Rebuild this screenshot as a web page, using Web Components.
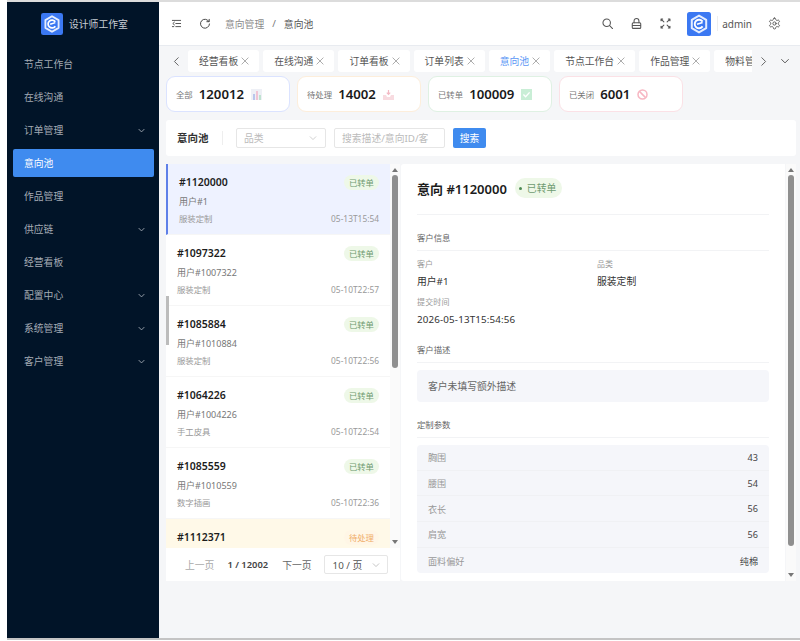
<!DOCTYPE html>
<html lang="zh-CN">
<head>
<meta charset="utf-8">
<title>意向池</title>
<style>
  html, body { margin: 0; height: 641px; overflow: hidden; background: #fff; }
  body { font-family: "Noto Sans", "Noto Sans CJK SC", sans-serif; color: #222; }
</style>
</head>
<body>
<app-shell>
  <side-nav slot="nav">
    <nav-item>节点工作台</nav-item>
    <nav-item>在线沟通</nav-item>
    <nav-item arrow>订单管理</nav-item>
    <nav-item active>意向池</nav-item>
    <nav-item>作品管理</nav-item>
    <nav-item arrow>供应链</nav-item>
    <nav-item>经营看板</nav-item>
    <nav-item arrow>配置中心</nav-item>
    <nav-item arrow>系统管理</nav-item>
    <nav-item arrow>客户管理</nav-item>
  </side-nav>
  <top-bar slot="top"></top-bar>
  <tab-strip slot="tabs">
    <tab-item>经营看板</tab-item>
    <tab-item>在线沟通</tab-item>
    <tab-item>订单看板</tab-item>
    <tab-item>订单列表</tab-item>
    <tab-item active>意向池</tab-item>
    <tab-item>节点工作台</tab-item>
    <tab-item>作品管理</tab-item>
    <tab-item>物料管理</tab-item>
  </tab-strip>
  <stat-row slot="stats">
    <stat-card label="全部" value="120012" tone="#dbe3ff" icon="chart"></stat-card>
    <stat-card label="待处理" value="14002" tone="#fdeedb" icon="inbox"></stat-card>
    <stat-card label="已转单" value="100009" tone="#dff1e3" icon="check"></stat-card>
    <stat-card label="已关闭" value="6001" tone="#fbe1e6" icon="ban"></stat-card>
  </stat-row>
  <filter-bar slot="filter"></filter-bar>
  <intent-list slot="list">
    <intent-row selected code="#1120000" user="用户#1" cat="服装定制" time="05-13T15:54"></intent-row>
    <intent-row code="#1097322" user="用户#1007322" cat="服装定制" time="05-10T22:57"></intent-row>
    <intent-row code="#1085884" user="用户#1010884" cat="服装定制" time="05-10T22:56"></intent-row>
    <intent-row code="#1064226" user="用户#1004226" cat="手工皮具" time="05-10T22:54"></intent-row>
    <intent-row code="#1085559" user="用户#1010559" cat="数字插画" time="05-10T22:36"></intent-row>
    <intent-row pending code="#1112371"></intent-row>
  </intent-list>
  <detail-panel slot="detail"></detail-panel>
</app-shell>

<script>
const ICONS = {
  fold: '<path d="M2 3.5h12M7 8h7M7 12.5h7M2 12.5h2M5 6 2.6 8 5 10"/>',
  refresh: '<path d="M13.2 4.6A6 6 0 1 0 14 8"/><path d="M13.6 1.8v3.1h-3.1"/>',
  search: '<circle cx="7" cy="7" r="4.6"/><path d="m10.4 10.4 3.8 3.8"/>',
  lock: '<rect x="2.8" y="7" width="10.4" height="7" rx="1.2"/><path d="M5 7V4.8a3 3 0 0 1 6 0V7M3 10.4h10"/>',
  full: '<path d="M2.5 2.5 6 6M13.5 2.5 10 6M2.5 13.5 6 10M13.5 13.5 10 10M2.5 2.5h2M2.5 2.5v2M13.5 2.5h-2M13.5 2.5v2M2.5 13.5h2M2.5 13.5v-2M13.5 13.5h-2M13.5 13.5v-2"/>',
  gear: '<g transform="scale(.667)"><path d="M12.22 2h-.44a2 2 0 0 0-2 2v.18a2 2 0 0 1-1 1.73l-.43.25a2 2 0 0 1-2 0l-.15-.08a2 2 0 0 0-2.73.73l-.22.38a2 2 0 0 0 .73 2.73l.15.1a2 2 0 0 1 1 1.72v.51a2 2 0 0 1-1 1.74l-.15.09a2 2 0 0 0-.73 2.73l.22.38a2 2 0 0 0 2.73.73l.15-.08a2 2 0 0 1 2 0l.43.25a2 2 0 0 1 1 1.73V20a2 2 0 0 0 2 2h.44a2 2 0 0 0 2-2v-.18a2 2 0 0 1 1-1.73l.43-.25a2 2 0 0 1 2 0l.15.08a2 2 0 0 0 2.73-.73l.22-.39a2 2 0 0 0-.73-2.73l-.15-.08a2 2 0 0 1-1-1.74v-.5a2 2 0 0 1 1-1.74l.15-.09a2 2 0 0 0 .73-2.73l-.22-.38a2 2 0 0 0-2.73-.73l-.15.08a2 2 0 0 1-2 0l-.43-.25a2 2 0 0 1-1-1.73V4a2 2 0 0 0-2-2z"/><circle cx="12" cy="12" r="3"/></g>',
  down: '<path d="m3.5 6 4.5 4.5L12.5 6"/>',
  left: '<path d="M10.5 2.5 5 8l5.5 5.5"/>',
  right: '<path d="M5.5 2.5 11 8l-5.5 5.5"/>',
  close: '<path d="m3 3 10 10M13 3 3 13"/>'
};

class AppIcon extends HTMLElement {
  connectedCallback() {
    const size = this.getAttribute('size') || 12;
    const width = this.getAttribute('stroke') || 1.3;
    this.attachShadow({ mode: 'open' }).innerHTML = `
      <style>:host { display: inline-flex; flex: none; }</style>
      <svg width="${size}" height="${size}" viewBox="0 0 16 16" fill="none" stroke="currentColor"
        stroke-width="${width}" stroke-linecap="round" stroke-linejoin="round">${ICONS[this.getAttribute('name')]}</svg>`;
  }
}
customElements.define('app-icon', AppIcon);

class BrandLogo extends HTMLElement {
  connectedCallback() {
    const size = this.getAttribute('size') || 22;
    this.attachShadow({ mode: 'open' }).innerHTML = `
      <style>:host { display: inline-flex; flex: none; }</style>
      <svg width="${size}" height="${size}" viewBox="0 0 24 24">
        <rect width="24" height="24" rx="2.5" fill="#3b78f2"/>
        <path d="M12 3.6 19.2 7.8v8.4L12 20.4l-7.2-4.2V7.8z" fill="none" stroke="#e4edff" stroke-width="2" stroke-linejoin="round"/>
        <path d="M15.6 9.6A4.3 4.3 0 1 0 15.6 14.4" fill="none" stroke="#fff" stroke-width="1.9"/>
        <path d="M10 12.3l5.6-1.8" fill="none" stroke="#fff" stroke-width="1.7"/>
      </svg>`;
  }
}
customElements.define('brand-logo', BrandLogo);

class AppShell extends HTMLElement {
  constructor() {
    super();
    this.attachShadow({ mode: 'open' }).innerHTML = `
      <style>
        :host {
          display: grid;
          grid-template-columns: 152px 1fr;
          height: 636px;
          margin: 2px 0 0 7px;
          border-bottom: 2px solid #c4c4c4;
          background: #f5f6f8;
          box-shadow: 0 -2px 0 #dcdcdc;
        }
        .main { display: flex; flex-direction: column; min-width: 0; overflow: hidden; }
        .content { display: flex; flex-direction: column; padding: 0 4px 0 7px; }
        .panels { display: flex; margin-top: 8px; height: 417px; position: relative; }
      </style>
      <slot name="nav"></slot>
      <div class="main">
        <slot name="top"></slot>
        <slot name="tabs"></slot>
        <div class="content">
          <slot name="stats"></slot>
          <slot name="filter"></slot>
          <div class="panels">
            <slot name="list"></slot>
            <slot name="detail"></slot>
          </div>
        </div>
      </div>`;
  }
}
customElements.define('app-shell', AppShell);

class SideNav extends HTMLElement {
  constructor() {
    super();
    this.attachShadow({ mode: 'open' }).innerHTML = `
      <style>
        :host { display: block; background: #011428; }
        .brand { display: flex; align-items: center; gap: 6px; height: 44px; padding: 0 0 0 34px; margin-bottom: 4px;
          color: #c9ced4; font-size: 9.8px; }
        .items { display: flex; flex-direction: column; gap: 5px; padding: 0 5px 0 6px; }
      </style>
      <div class="brand"><brand-logo size="22"></brand-logo><span>设计师工作室</span></div>
      <div class="items"><slot></slot></div>`;
  }
}
customElements.define('side-nav', SideNav);

class NavItem extends HTMLElement {
  connectedCallback() {
    const arrow = this.hasAttribute('arrow') ? '<app-icon name="down" size="9" stroke="1.6"></app-icon>' : '';
    this.attachShadow({ mode: 'open' }).innerHTML = `
      <style>
        :host { display: flex; align-items: center; justify-content: space-between; height: 28px;
          padding: 0 8px 0 11px; border-radius: 2px; color: #a4abb4; font-size: 9.8px; }
        :host([active]) { background: #3f8bef; color: #fff; }
      </style>
      <slot></slot>${arrow}`;
  }
}
customElements.define('nav-item', NavItem);

class TopBar extends HTMLElement {
  constructor() {
    super();
    this.attachShadow({ mode: 'open' }).innerHTML = `
      <style>
        :host { display: flex; align-items: center; height: 44px; flex: none; padding: 0 19px 0 12px; background: #fff;
          border-bottom: 1px solid #e8ebf0; box-sizing: border-box; color: #444; font-size: 9.8px; }
        .left { display: flex; align-items: center; gap: 17px; margin-right: 14px; }
        .crumb { color: #8b8b8b; }
        .sep { margin: 0 8px; color: #777; }
        .now { color: #555; }
        .right { margin-left: auto; display: flex; align-items: center; gap: 16px; color: #555; }
        .user { display: flex; align-items: center; margin-left: -1px; }
        .user i { width: 1px; height: 15px; background: #eee; margin: 0 4px 0 6px; }
        .user span { font-size: 10px; color: #555; }
      </style>
      <div class="left"><app-icon name="fold" size="11"></app-icon><app-icon name="refresh" size="12"></app-icon></div>
      <span class="crumb">意向管理</span><span class="sep">/</span><span class="now">意向池</span>
      <div class="right">
        <app-icon name="search" size="13"></app-icon>
        <app-icon name="lock" size="13"></app-icon>
        <app-icon name="full" size="13"></app-icon>
        <div class="user"><brand-logo size="24"></brand-logo><i></i><span>admin</span></div>
        <app-icon name="gear" size="13" stroke="1.7"></app-icon>
      </div>`;
  }
}
customElements.define('top-bar', TopBar);

class TabStrip extends HTMLElement {
  constructor() {
    super();
    this.attachShadow({ mode: 'open' }).innerHTML = `
      <style>
        :host { display: flex; align-items: center; height: 22px; margin-top: 4px; flex: none; color: #555; }
        .arrow { width: 29px; box-sizing: border-box; padding-left: 12px; display: flex; flex: none; }
        .track { display: flex; gap: 4px; width: 564px; flex: none; overflow: hidden; }
        .end { margin-left: 6px; width: 11px; display: flex; justify-content: center; }
        .more { margin-left: 10px; }
      </style>
      <div class="arrow"><app-icon name="left" size="11"></app-icon></div>
      <div class="track"><slot></slot></div>
      <div class="end"><app-icon name="right" size="11"></app-icon></div>
      <div class="more"><app-icon name="down" size="12"></app-icon></div>`;
  }
}
customElements.define('tab-strip', TabStrip);

class TabItem extends HTMLElement {
  connectedCallback() {
    this.attachShadow({ mode: 'open' }).innerHTML = `
      <style>
        :host { display: inline-flex; align-items: center; gap: 2px; height: 22px; padding: 0 9px 0 11px; flex: none;
          background: #fff; border-radius: 3px; color: #555; font-size: 9.8px; }
        :host([active]) { color: #5b97f5; }
        app-icon { color: #888; }
      </style>
      <slot></slot><app-icon name="close" size="10" stroke="1.1"></app-icon>`;
  }
}
customElements.define('tab-item', TabItem);

class StatRow extends HTMLElement {
  constructor() {
    super();
    this.attachShadow({ mode: 'open' }).innerHTML = `
      <style>:host { display: flex; gap: 7px; margin-top: 4px; }</style><slot></slot>`;
  }
}
customElements.define('stat-row', StatRow);

const STAT_ICONS = {
  chart: '<rect x="0" y="0" width="11" height="11" fill="#eef0f6"/><rect x="2" y="5" width="2" height="6" fill="#b9c6ec"/><rect x="5" y="2" width="2" height="9" fill="#f0c4d4"/><rect x="8" y="6" width="2" height="5" fill="#bfe3d0"/>',
  inbox: '<path d="M0 6h3l1 2h3l1-2h3v5H0z" fill="#f8dbe0"/><path d="M5.5 1v4M3.8 3.6l1.7 1.8 1.7-1.8" stroke="#f3b9c4" stroke-width="1.2" fill="none"/>',
  check: '<rect width="11" height="11" fill="#c9eed6"/><path d="m2.4 5.6 2.2 2.2 4-4.4" stroke="#fff" stroke-width="1.4" fill="none"/>',
  ban: '<circle cx="5.5" cy="5.5" r="4.5" stroke="#f7b6c2" stroke-width="1.5" fill="none"/><path d="m2.4 2.4 6.2 6.2" stroke="#f7b6c2" stroke-width="1.5"/>'
};

class StatCard extends HTMLElement {
  connectedCallback() {
    const tone = this.getAttribute('tone');
    this.attachShadow({ mode: 'open' }).innerHTML = `
      <style>
        :host { display: flex; align-items: center; width: 124px; height: 36px; box-sizing: border-box; padding: 0 9px;
          background: #fff; border: 1px solid ${tone}; border-radius: 9px; }
        .label { font-size: 8.4px; color: #777; margin-right: 6px; }
        .value { font-size: 13.2px; font-weight: 600; color: #1a1a1a; margin-right: 7px; }
        svg { flex: none; }
      </style>
      <span class="label">${this.getAttribute('label')}</span>
      <span class="value">${this.getAttribute('value')}</span>
      <svg width="11" height="11" viewBox="0 0 11 11">${STAT_ICONS[this.getAttribute('icon')]}</svg>`;
  }
}
customElements.define('stat-card', StatCard);

class FilterBar extends HTMLElement {
  constructor() {
    super();
    this.attachShadow({ mode: 'open' }).innerHTML = `
      <style>
        :host { display: flex; align-items: center; height: 36px; margin-top: 8px; padding: 0 11px; background: #fff;
          border-radius: 3px; font-size: 9.8px; }
        .title { font-size: 10.5px; font-weight: 600; color: #333; width: 45px; border-right: 1px solid #eee; line-height: 14px; margin-right: 13px; }
        .box { display: flex; align-items: center; height: 20px; box-sizing: border-box; padding: 0 7px; border: 1px solid #e6e6e6;
          border-radius: 2px; color: #bbb; white-space: nowrap; }
        .select { width: 90px; justify-content: space-between; margin-right: 8px; }
        .input { width: 111px; margin-right: 8px; padding-right: 0; }
        .btn { display: flex; align-items: center; justify-content: center; width: 33px; height: 20px; border-radius: 2px; background: #3f8bef; color: #fff; }
      </style>
      <span class="title">意向池</span>
      <div class="box select"><span>品类</span><app-icon name="down" size="10" stroke="1.1"></app-icon></div>
      <div class="box input"><span>搜索描述/意向ID/客</span></div>
      <div class="btn">搜索</div>`;
  }
}
customElements.define('filter-bar', FilterBar);

class VScroll extends HTMLElement {
  connectedCallback() {
    this.attachShadow({ mode: 'open' }).innerHTML = `
      <style>
        :host { display: flex; flex-direction: column; align-items: center; width: 10px; flex: none; background: #fafafa; }
        .up, .down { width: 0; height: 0; border-left: 3.5px solid transparent; border-right: 3.5px solid transparent; flex: none; }
        .up { border-bottom: 4px solid #777; margin: 4px 0 3px; }
        .down { border-top: 4px solid #777; margin: auto 0 4px; }
        .thumb { width: 6px; border-radius: 3px; background: #8f8f8f; height: ${this.getAttribute('thumb')}px; flex: none; }
      </style>
      <div class="up"></div><div class="thumb"></div><div class="down"></div>`;
  }
}
customElements.define('v-scroll', VScroll);

class IntentList extends HTMLElement {
  constructor() {
    super();
    this.attachShadow({ mode: 'open' }).innerHTML = `
      <style>
        :host { display: flex; flex-direction: column; width: 234px; flex: none; position: relative; }
        .view { display: flex; height: 384px; flex: none; }
        .rows { width: 224px; flex: none; overflow: hidden; background: #fff; }
        v-scroll { height: 384px; }
        .pager { display: flex; align-items: center; height: 33px; flex: none; padding: 0 1px 0 19px; background: #fff; font-size: 9.8px; color: #666; }
        .prev { color: #aaa; margin-right: 13px; }
        .pos { font-size: 9.4px; font-weight: 600; color: #444; margin-right: 14px; }
        .size { display: flex; align-items: center; justify-content: space-between; width: 64px; height: 19px; margin-left: 12px;
          box-sizing: border-box; padding: 0 6px 0 8px; border: 1px solid #e6e6e6; border-radius: 2px; color: #555; }
        .size app-icon { color: #aaa; }
        .outer { position: absolute; left: 0; top: 132px; width: 2.5px; height: 49px; background: #bcbcbc; }
      </style>
      <div class="view">
        <div class="rows"><slot></slot></div>
        <v-scroll thumb="193"></v-scroll>
      </div>
      <div class="pager">
        <span class="prev">上一页</span><span class="pos">1 / 12002</span><span>下一页</span>
        <div class="size"><span>10 / 页</span><app-icon name="down" size="10" stroke="1.1"></app-icon></div>
      </div>
      <div class="outer"></div>`;
  }
}
customElements.define('intent-list', IntentList);

class IntentRow extends HTMLElement {
  connectedCallback() {
    const pending = this.hasAttribute('pending');
    // the last row is cut off by the pager, only its head is visible
    const rest = this.hasAttribute('user') ? `
      <div class="user">${this.getAttribute('user')}</div>
      <div class="foot"><span>${this.getAttribute('cat')}</span><span>${this.getAttribute('time')}</span></div>` : '';
    this.attachShadow({ mode: 'open' }).innerHTML = `
      <style>
        :host { display: flex; flex-direction: column; height: 71px; box-sizing: border-box; padding: 8px 11px 0 11px; background: #fff; border-bottom: 1px solid #f6f6f6; }
        :host([selected]) { background: #eef2ff; border-left: 2px solid #5f80e8; }
        :host([pending]) { background: #fff9e8; }
        .head { display: flex; align-items: center; justify-content: space-between; height: 20px; }
        .code { font-size: 10.5px; font-weight: 600; color: #1c1c1c; }
        .tag { display: flex; align-items: center; height: 15px; padding: 0 5px; border-radius: 8px; font-size: 8.4px; background: #eef8e8; color: #6f9b70; }
        :host([pending]) .tag { background: #fff6e6; color: #f0ad69; }
        .user { font-size: 9px; color: #777; margin-top: 3px; height: 14px; line-height: 14px; }
        .foot { display: flex; justify-content: space-between; font-size: 8.4px; color: #999; margin-top: 3px; line-height: 14px; }
      </style>
      <div class="head"><span class="code">${this.getAttribute('code')}</span><span class="tag">${pending ? '待处理' : '已转单'}</span></div>${rest}`;
  }
}
customElements.define('intent-row', IntentRow);

class SectionHead extends HTMLElement {
  connectedCallback() {
    this.attachShadow({ mode: 'open' }).innerHTML = `
      <style>
        :host { display: block; height: 22px; line-height: 18px; border-bottom: 1px solid #f2f3f5; box-sizing: border-box;
          font-size: 8.4px; color: #666; }
      </style><slot></slot>`;
  }
}
customElements.define('section-head', SectionHead);

class DetailField extends HTMLElement {
  connectedCallback() {
    this.attachShadow({ mode: 'open' }).innerHTML = `
      <style>
        :host { display: block; }
        .k { font-size: 8px; color: #999; line-height: 14px; }
        .v { font-size: 9.8px; color: #333; line-height: 16px; margin-top: 3px; }
      </style>
      <div class="k">${this.getAttribute('label')}</div><div class="v"><slot></slot></div>`;
  }
}
customElements.define('detail-field', DetailField);

class ParamRow extends HTMLElement {
  connectedCallback() {
    this.attachShadow({ mode: 'open' }).innerHTML = `
      <style>
        :host { display: flex; align-items: center; justify-content: space-between; height: 25.7px; padding: 0 11px;
          box-sizing: border-box; border-bottom: 1px solid #f0f1f4; font-size: 9.1px; }
        :host(:last-child) { border-bottom: 0; }
        .k { color: #999; } .v { color: #444; }
      </style>
      <span class="k">${this.getAttribute('label')}</span><span class="v">${this.getAttribute('value')}</span>`;
  }
}
customElements.define('param-row', ParamRow);

class DetailPanel extends HTMLElement {
  constructor() {
    super();
    this.attachShadow({ mode: 'open' }).innerHTML = `
      <style>
        :host { display: flex; flex: 1; margin-left: 1px; min-width: 0; }
        .body { flex: 1; background: #fff; padding: 14px 16px 0 16px; border-radius: 3px 0 0 3px; }
        v-scroll { height: 417px; margin-left: 1px; }
        .title { display: flex; align-items: center; height: 20px; }
        h2 { margin: 0; font-size: 13px; font-weight: 600; color: #1c1c1c; }
        .tag { display: flex; align-items: center; gap: 5px; height: 20px; margin-left: 8px; padding: 0 6px 0 3px; border-radius: 10px;
          background: #eef8e8; color: #6f9b70; font-size: 9.8px; }
        .tag i { width: 3px; height: 3px; border-radius: 50%; background: #4d8a52; margin-left: 1px; }
        .rule { height: 1px; background: #f2f3f5; margin: 16px 0 14px; }
        .grid { display: grid; grid-template-columns: 180px 1fr; padding-top: 6px; row-gap: 5px; }
        .grid detail-field:nth-child(3) { grid-column: 1 / 3; letter-spacing: .15px; }
        .sec { margin-top: 13px; }
        .note { margin-top: 7px; height: 32px; display: flex; align-items: center; padding: 0 11px; background: #f5f6fa; border-radius: 4px;
          font-size: 9.8px; color: #666; }
        .params { margin-top: 7px; background: #f5f6fa; border-radius: 4px; }
      </style>
      <div class="body">
        <div class="title"><h2>意向 #1120000</h2><span class="tag"><i></i>已转单</span></div>
        <div class="rule"></div>
        <section-head>客户信息</section-head>
        <div class="grid">
          <detail-field label="客户">用户#1</detail-field>
          <detail-field label="品类">服装定制</detail-field>
          <detail-field label="提交时间">2026-05-13T15:54:56</detail-field>
        </div>
        <section-head class="sec">客户描述</section-head>
        <div class="note">客户未填写额外描述</div>
        <section-head class="sec" style="margin-top:14px">定制参数</section-head>
        <div class="params">
          <param-row label="胸围" value="43"></param-row>
          <param-row label="腰围" value="54"></param-row>
          <param-row label="衣长" value="56"></param-row>
          <param-row label="肩宽" value="56"></param-row>
          <param-row label="面料偏好" value="纯棉"></param-row>
        </div>
      </div>
      <v-scroll thumb="371"></v-scroll>`;
  }
}
customElements.define('detail-panel', DetailPanel);
</script>
</body>
</html>
